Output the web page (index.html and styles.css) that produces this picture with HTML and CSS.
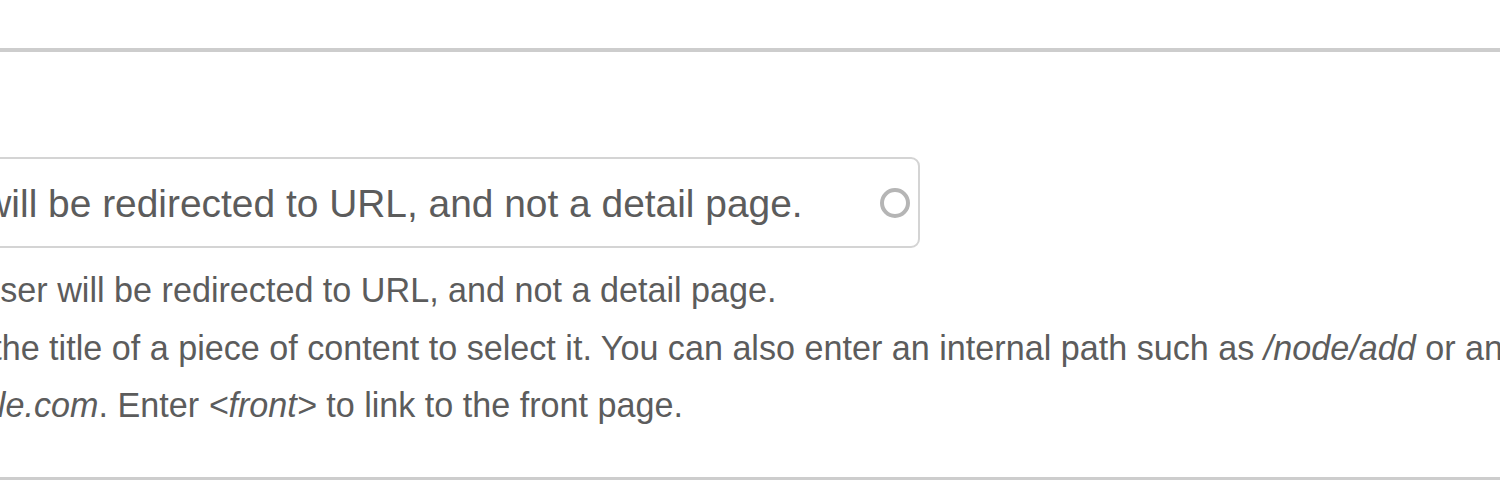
FILE: index.html
```html
<!DOCTYPE html>
<html lang="en">
<head>
  <meta charset="UTF-8">
  <meta name="viewport" content="width=device-width, initial-scale=1">
  <title>Link field</title>
  <link rel="stylesheet" href="styles.css">
</head>
<body>
  <div class="page">
    <div class="separator"></div>

    <!-- Поле ссылки с автодополнением -->
    <div class="form-item">
      <div class="input-wrap">
        <input type="text" class="form-text" value="The user will be redirected to URL, and not a detail page.">
        <span class="throbber"></span>
      </div>
      <div class="description first">The user will be redirected to URL, and not a detail page.</div>
      <div class="description">
        Start typing the title of a piece of content to select it. You can also enter an internal path such as <em>/node/add</em> or an external URL such as<br>
        <em>http://example.com</em>. Enter <em>&lt;front&gt;</em> to link to the front page.
      </div>
    </div>

    <div class="separator bottom"></div>
  </div>
</body>
</html>
```

FILE: styles.css
```css
html, body {
  margin: 0;
  padding: 0;
  background: #fff;
  overflow: hidden;
}
.page {
  width: 1500px;
  height: 500px;
  padding-top: 48px;
  box-sizing: border-box;
  font-family: "Liberation Sans", Arial, sans-serif;
  color: #5c5c5c;
}
/* Серые разделители сверху и снизу */
.separator {
  height: 4px;
  background: #cdcdcd;
}
.separator.bottom {
  height: 3px;
  margin-top: 42px;
}
/* Блок формы сдвинут влево — как на обрезанном скриншоте */
.form-item {
  margin-left: -190px;
  padding-top: 105px;
}
.input-wrap {
  position: relative;
  width: 1110px;
}
.form-text {
  display: block;
  width: 100%;
  height: 91px;
  box-sizing: border-box;
  margin: 0;
  padding: 3px 60px 0 7px;
  border: 2px solid #d4d4d4;
  border-radius: 9px;
  font-family: inherit;
  font-size: 38.9px;
  color: #5c5c5c;
  background: #fff;
  outline: none;
}
/* Индикатор автодополнения */
.throbber {
  position: absolute;
  right: 10px;
  top: 31px;
  width: 22px;
  height: 22px;
  border: 4px solid #b5b5b5;
  border-radius: 50%;
}
.description {
  font-size: 34.15px;
  line-height: 57.5px;
  white-space: nowrap;
}
.description.first {
  margin-top: 14px;
  padding-left: 103px;
}
.description em {
  font-style: italic;
}
```
